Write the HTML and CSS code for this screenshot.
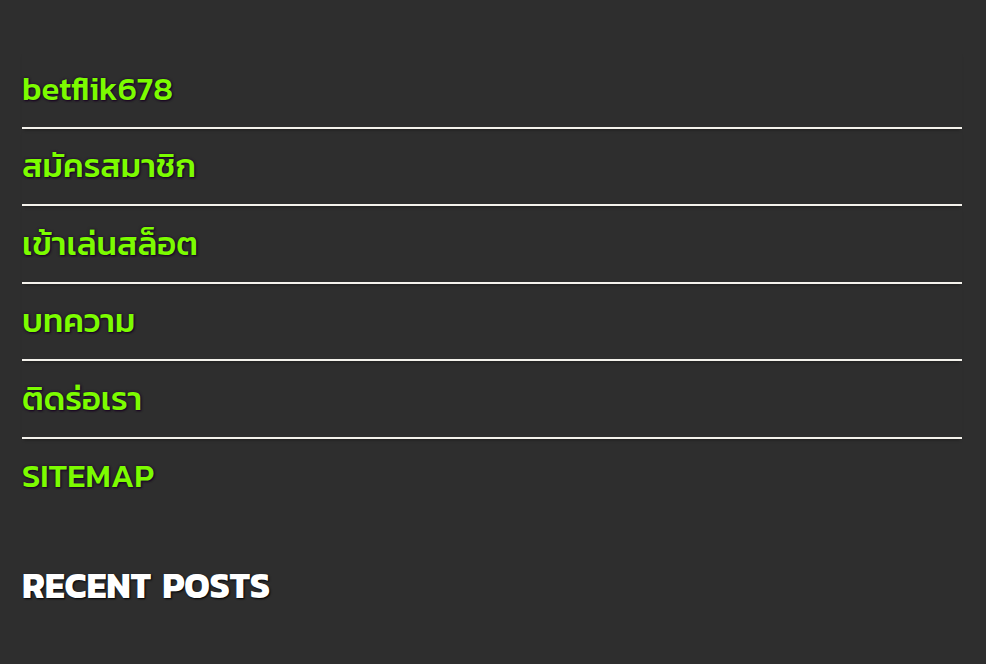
FILE: index.html
```html
<!DOCTYPE html>
<html lang="th">
<head>
    <meta charset="UTF-8">
    <meta name="viewport" content="width=device-width, initial-scale=1.0">
    <title>betflik678</title>
    <link rel="stylesheet" href="styles.css">
</head>
<body>
    <div class="sidebar">
        <ul class="menu">
            <li><a href="#">betflik678</a></li>
            <li><a href="#">สมัครสมาชิก</a></li>
            <li><a href="#">เข้าเล่นสล็อต</a></li>
            <li><a href="#">บทความ</a></li>
            <li><a href="#">ติดร่อเรา</a></li>
            <li><a href="#">SITEMAP</a></li>
        </ul>

        <h2 class="widget-title">RECENT POSTS</h2>
    </div>
</body>
</html>
```

FILE: styles.css
```css
body {
    margin: 0;
    background-color: #2e2e2e;
    font-family: Kanit, Prompt, "Noto Sans", "DejaVu Sans", sans-serif;
}
.sidebar {
    padding: 51px 24px 0 22px;
}
.menu {
    list-style: none;
    margin: 0;
    padding: 0;
}
.menu li {
    padding: 17.5px 0 18px;
    border-bottom: 2px solid #f4f2ec;
    box-shadow: 0 3px 3px -2px rgba(0,0,0,0.35);
}
.menu li:last-child {
    border-bottom: none;
    box-shadow: none;
}
.menu a {
    display: block;
    height: 40px;
    line-height: 40px;
    font-size: 33px;
    font-weight: 500;
    color: #7cfc00;
    text-decoration: none;
    text-shadow: 0 0 3px #22062e, 1px 1px 2px #14031c;
}
.widget-title {
    margin: 51px 0 0;
    font-size: 36px;
    line-height: 40px;
    font-weight: bold;
    word-spacing: 4px;
    color: #ffffff;
    text-shadow: 1px 1px 2px #000, -1px 0 1px #20304a;
}
```
